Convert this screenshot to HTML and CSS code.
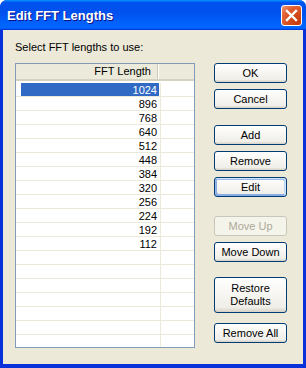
FILE: index.html
```html
<!DOCTYPE html>
<html lang="en">
<head>
  <meta charset="UTF-8" />
  <title>Edit FFT Lengths</title>
  <link rel="stylesheet" href="styles.css">
</head>
<body>
<div class="window">
  <div class="titlebar">
    <span class="title">Edit FFT Lengths</span>
    <div class="close-btn">
      <svg width="13" height="13" viewBox="0 0 13 13">
        <path d="M2 2 L11 11 M11 2 L2 11" stroke="#fff" stroke-width="2.4" stroke-linecap="square" />
      </svg>
    </div>
  </div>
  <div class="client">
    <div class="prompt">Select FFT lengths to use:</div>
    <div class="content">
      <div class="listview">
        <div class="lv-header">
          <div class="lv-col">FFT Length</div>
          <div class="lv-rest"></div>
        </div>
        <div class="lv-rows">
          <div class="lv-row selected"><div class="cell"><span class="val">1024</span></div></div>
          <div class="lv-row"><div class="cell"><span class="val">896</span></div></div>
          <div class="lv-row"><div class="cell"><span class="val">768</span></div></div>
          <div class="lv-row"><div class="cell"><span class="val">640</span></div></div>
          <div class="lv-row"><div class="cell"><span class="val">512</span></div></div>
          <div class="lv-row"><div class="cell"><span class="val">448</span></div></div>
          <div class="lv-row"><div class="cell"><span class="val">384</span></div></div>
          <div class="lv-row"><div class="cell"><span class="val">320</span></div></div>
          <div class="lv-row"><div class="cell"><span class="val">256</span></div></div>
          <div class="lv-row"><div class="cell"><span class="val">224</span></div></div>
          <div class="lv-row"><div class="cell"><span class="val">192</span></div></div>
          <div class="lv-row"><div class="cell"><span class="val">112</span></div></div>
          <div class="lv-row"><div class="cell"><span class="val"></span></div></div>
          <div class="lv-row"><div class="cell"><span class="val"></span></div></div>
          <div class="lv-row"><div class="cell"><span class="val"></span></div></div>
          <div class="lv-row"><div class="cell"><span class="val"></span></div></div>
          <div class="lv-row"><div class="cell"><span class="val"></span></div></div>
          <div class="lv-row"><div class="cell"><span class="val"></span></div></div>
          <div class="lv-row"><div class="cell"><span class="val"></span></div></div>
          <div class="lv-row"><div class="cell"><span class="val"></span></div></div>
        </div>
      </div>
      <div class="buttons">
        <button class="btn">OK</button>
        <button class="btn gap-s">Cancel</button>
        <button class="btn gap-l">Add</button>
        <button class="btn gap-s">Remove</button>
        <button class="btn gap-s focused">Edit</button>
        <button class="btn gap-xl" disabled>Move Up</button>
        <button class="btn gap-s">Move Down</button>
        <button class="btn tall gap-m">Restore<br>Defaults</button>
        <button class="btn gap-r">Remove All</button>
      </div>
    </div>
  </div>
</div>
</body>
</html>
```

FILE: styles.css
```css
body {
  margin: 0;
  background: #fff;
  font-family: 'Liberation Sans', Arial, sans-serif;
  font-size: 11px;
}

.window {
  width: 306px;
  height: 368px;
  display: flex;
  flex-direction: column;
  background: #0831d9;
  border-radius: 7px 7px 0 0;
  overflow: hidden;
  box-sizing: border-box;
}

.titlebar {
  height: 30px;
  flex: none;
  display: flex;
  align-items: center;
  justify-content: space-between;
  padding: 0 4px 0 7px;
  background: linear-gradient(to bottom, #0997ff 0%, #0053ee 8%, #0050ee 40%, #0066ff 88%, #0066ff 93%, #005bff 95%, #003dd7 96%, #003dd7 100%);
}

.title {
  color: #fff;
  font-family: 'Liberation Sans', Arial, sans-serif;
  font-weight: bold;
  font-size: 13px;
  padding-top: 1px;
  text-shadow: 1px 1px #0f1089;
}

.close-btn {
  width: 21px;
  height: 21px;
  box-sizing: border-box;
  border: 1px solid #fff;
  border-radius: 3px;
  background: radial-gradient(circle at 85% 85%, #c83a0c 0%, #d9501f 50%, #e2643a 70%, #ee9a7a 100%);
  display: flex;
  align-items: center;
  justify-content: center;
}

.client {
  flex: 1;
  margin: 0 3px 4px 3px;
  background: #ece9d8;
  padding: 11px 16px 0 12px;
}

.prompt {
  line-height: 13px;
  margin-bottom: 9px;
}

.content {
  display: flex;
  gap: 19px;
}

/* list view */
.listview {
  width: 180px;
  height: 285px;
  box-sizing: border-box;
  border: 1px solid #7f9db9;
  background: #fff;
  overflow: hidden;
}

.lv-header {
  display: flex;
  height: 17px;
  box-sizing: border-box;
  background: #ebeadb;
  border-bottom: 2px solid #d6d2c2;
  margin-bottom: 2px;
}

.lv-col {
  width: 142px;
  box-sizing: border-box;
  text-align: right;
  padding-right: 6px;
  line-height: 15px;
  border-right: 1px solid #cbc7b8;
  box-shadow: 1px 0 #fff;
}

.lv-rest {
  flex: 1;
}

.lv-row {
  height: 14px;
  box-sizing: border-box;
  border-bottom: 1px solid #ece9d8;
}

.cell {
  width: 145px;
  height: 13px;
  box-sizing: border-box;
  padding: 0 1px 0 5px;
  border-right: 1px solid #ece9d8;
}

.val {
  display: block;
  height: 13px;
  line-height: 14px;
  text-align: right;
  padding-right: 2px;
}

.lv-row.selected .val {
  background: #316ac5;
  color: #fff;
}

/* buttons */
.buttons {
  width: 73px;
  display: flex;
  flex-direction: column;
}

.btn {
  height: 20px;
  box-sizing: border-box;
  border: 1px solid #003c74;
  border-radius: 3px;
  background: linear-gradient(to bottom, #fff 0%, #f8f7f3 40%, #efeee9 86%, #d6d0c5 100%);
  font-family: 'Liberation Sans', Arial, sans-serif;
  font-size: 11px;
  color: #000;
  padding: 0;
  line-height: 13px;
}

.btn.tall {
  height: 36px;
}

.btn.focused {
  box-shadow: inset -1px 1px #cee7ff, inset 1px 2px #98b8ea, inset -2px 2px #bcd4f6, inset 1px -1px #89ade4, inset 2px -2px #89ade4;
}

.btn:disabled {
  border-color: #c9c7ba;
  background: #f5f4ea;
  color: #aca899;
}

.gap-s { margin-top: 6px; }
.gap-l { margin-top: 16px; }
.gap-xl { margin-top: 19px; }
.gap-m { margin-top: 15px; }
.gap-r { margin-top: 10px; }
```
